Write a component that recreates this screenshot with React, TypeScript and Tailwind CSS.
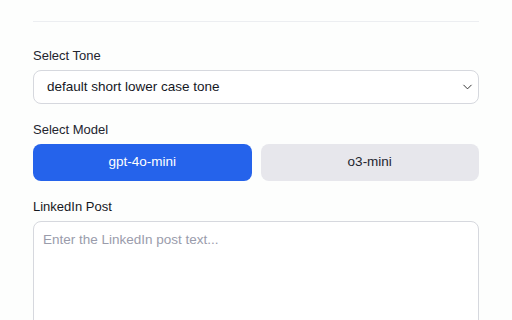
import * as React from 'react'
import { ChevronDown } from 'lucide-react'

export default function App() {
  const [model, setModel] = React.useState('gpt-4o-mini')

  return (
    <div
      className="h-[320px] w-full overflow-hidden bg-[#fdfefd] px-[33px] text-[#1f2230]"
      style={{ fontFamily: '"Liberation Sans", Arial, sans-serif' }}
    >
      {/* Divider */}
      <div className="pt-[21px]">
        <div className="h-px w-full bg-[#eceef1]" />
      </div>

      {/* Tone */}
      <label className="mt-[24px] block text-[13px] leading-[20px] text-[#23252f]">Select Tone</label>
      <div className="relative mt-[4px]">
        <select className="h-[34px] w-full appearance-none rounded-[8px] border border-[#d6d8de] bg-white pl-[13px] text-[13.5px] text-[#16181f] outline-none">
          <option>default short lower case tone</option>
        </select>
        <ChevronDown
          className="pointer-events-none absolute right-[4px] top-1/2 h-[15px] w-[15px] -translate-y-1/2 text-[#2a2a2a]"
          strokeWidth={1.5}
        />
      </div>

      {/* Model */}
      <label className="mt-[16px] block text-[13px] leading-[20px] text-[#23252f]">Select Model</label>
      <div className="mt-[4px] grid grid-cols-2 gap-[9px]">
        {['gpt-4o-mini', 'o3-mini'].map((m) => (
          <button
            key={m}
            onClick={() => setModel(m)}
            className={
              m === model
                ? 'h-[37px] rounded-[8px] bg-[#2563eb] text-[13.5px] text-white'
                : 'h-[37px] rounded-[8px] bg-[#e7e7ec] text-[13.5px] text-[#23252f]'
            }
          >
            {m}
          </button>
        ))}
      </div>

      {/* Post */}
      <label className="mt-[16px] block text-[13px] leading-[20px] text-[#16181f]">LinkedIn Post</label>
      <textarea
        placeholder="Enter the LinkedIn post text..."
        className="mt-[4px] block h-[140px] w-full resize-none rounded-[8px] border border-[#d6d8de] bg-white px-[9px] py-[8px] text-[13.5px] text-[#16181f] outline-none placeholder:text-[#9a9cab]"
      />
    </div>
  )
}
